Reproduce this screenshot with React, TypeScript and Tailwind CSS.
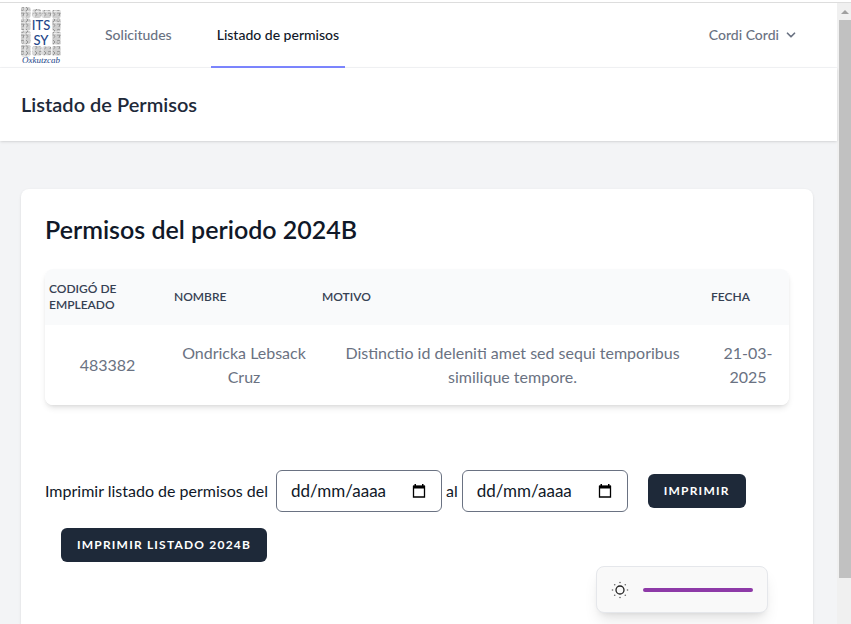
import { useState } from "react";
import { ChevronDown } from "lucide-react";

const columns = [
  { label: "Codigó de empleado", width: "w-[125px]" },
  { label: "Nombre", width: "w-[148px]" },
  { label: "Motivo", width: "" },
  { label: "Fecha", width: "w-[82px]" },
];

const rows = [
  {
    code: "483382",
    name: "Ondricka Lebsack Cruz",
    reason: "Distinctio id deleniti amet sed sequi temporibus similique tempore.",
    date: "21-03-2025",
  },
];

function Logo() {
  return (
    <svg width="42" height="60" viewBox="0 0 42 60" role="img" aria-label="ITSSY Oxkutzcab">
      <defs>
        <pattern id="glyph" width="9" height="11" patternUnits="userSpaceOnUse">
          <rect width="9" height="11" fill="#cfcfcf" />
          <path
            d="M1 2c2-1.500 4 0 3 1.500S1.500 5 1 3.500M6 1l2 2-2 2M1 7h3l-1 3M6 7c2 0 2.500 2 .5 3"
            fill="none"
            stroke="#8c8c8c"
            strokeWidth="0.900"
          />
          <path d="M4.800 0v4M0 5.800h5M5 8v3M7 5.500h2" stroke="#f2f2f2" strokeWidth="0.900" />
        </pattern>
      </defs>
      <g fill="url(#glyph)">
        <rect x="1" y="1" width="9.500" height="11" rx="2" />
        <rect x="1" y="12.500" width="9.500" height="12" rx="2" />
        <rect x="1" y="25" width="9.500" height="13" rx="2" />
        <rect x="1" y="38.500" width="9.500" height="12" rx="2" />
        <rect x="12.500" y="3" width="8.500" height="9" rx="2" />
        <rect x="21.500" y="4" width="9.500" height="8" rx="2" />
        <rect x="31.500" y="4" width="9.500" height="8" rx="2" />
        <rect x="32" y="12.500" width="9" height="12.500" rx="2" />
        <rect x="32" y="25.500" width="9" height="13.500" rx="2" />
        <rect x="12.500" y="40" width="9" height="10" rx="2" />
        <rect x="22" y="40.500" width="9.500" height="9" rx="2" />
        <rect x="32" y="40" width="9" height="10" rx="2" />
      </g>
      <g fill="#24478a" textAnchor="middle">
        <text x="21" y="24" className="text-[13px] font-medium">ITS</text>
        <text x="21" y="39" className="text-[13px] font-medium">SY</text>
        <text x="21" y="57" className="font-['Liberation_Serif',serif] text-[9px] italic">Oxkutzcab</text>
      </g>
    </svg>
  );
}

function DateField({ id, label }: { id: string; label: string }) {
  const [value, setValue] = useState("");
  return (
    <span className="flex h-[42px] w-[166px] items-center rounded-md border border-gray-500 bg-white px-3.5">
      <input
        id={id}
        type="text"
        aria-label={label}
        placeholder="dd/mm/aaaa"
        value={value}
        onChange={(e) => setValue(e.target.value)}
        className="min-w-0 flex-1 bg-transparent text-[17px] text-gray-900 outline-none placeholder:text-gray-900"
      />
      <button type="button" aria-label="Abrir calendario" className="text-black">
        <svg width="16" height="16" viewBox="0 0 16 16" fill="none">
          <path d="M2.500 3.500h11v10.500h-11z" stroke="currentColor" strokeWidth="1.300" />
          <path d="M2 2.500h12V5.500H2zM3.500 1H5v2H3.500zM11 1h1.500v2H11z" fill="currentColor" />
        </svg>
      </button>
    </span>
  );
}

function DarkButton({ children }: { children: string }) {
  return (
    <button
      type="button"
      className="ml-4 h-[34px] rounded-md bg-gray-800 px-4 text-xs font-bold tracking-widest text-white uppercase"
    >
      {children}
    </button>
  );
}

function BrightnessPanel() {
  const [level, setLevel] = useState(100);
  return (
    <div className="absolute right-[83px] bottom-[11px] flex h-[47px] w-[172px] items-center justify-between rounded-lg border border-gray-200 bg-[#f9f9f9] px-3.5 shadow-lg">
      <svg width="18" height="18" viewBox="0 0 18 18" fill="none" className="shrink-0">
        <circle cx="9" cy="9" r="4" stroke="#222" strokeWidth="1.300" />
        <g fill="#666">
          <circle cx="9" cy="1.500" r=".8" />
          <circle cx="9" cy="16.500" r=".8" />
          <circle cx="1.500" cy="9" r=".8" />
          <circle cx="16.500" cy="9" r=".8" />
          <circle cx="3.700" cy="3.700" r=".8" />
          <circle cx="14.300" cy="3.700" r=".8" />
          <circle cx="3.700" cy="14.300" r=".8" />
          <circle cx="14.300" cy="14.300" r=".8" />
        </g>
      </svg>
      <input
        type="range"
        aria-label="Brillo"
        min={0}
        max={100}
        value={level}
        onChange={(e) => setLevel(Number(e.target.value))}
        className="h-1 w-[110px] appearance-none rounded-full bg-[#8e3aa8] [&::-webkit-slider-thumb]:size-0 [&::-webkit-slider-thumb]:appearance-none"
      />
    </div>
  );
}

function Scrollbar() {
  return (
    <div aria-hidden="true" className="flex w-3.5 shrink-0 flex-col items-end bg-[#f0f0f0]">
      <div className="flex h-[17px] w-3 items-center justify-center">
        <svg width="8" height="4" viewBox="0 0 8 4">
          <path d="M0 4 4 0l4 4z" fill="#a0a0a0" />
        </svg>
      </div>
      <div className="w-3 grow-[12] bg-[#c1c1c1]" />
      <div className="grow" />
    </div>
  );
}

export default function App() {
  return (
    <div className="relative flex h-screen flex-col overflow-hidden bg-white font-['Lato',sans-serif] text-gray-900">
      <div className="h-[3px] shrink-0 border-b border-[#dddddd]" />
      <div className="flex min-h-0 flex-1">
        <div className="flex min-w-0 flex-1 flex-col bg-gray-100">
          <nav className="flex h-[65px] shrink-0 items-stretch border-b border-gray-100 bg-white pr-[38px] pl-5">
            <a href="#" className="mt-[3px] mr-[37px] shrink-0">
              <Logo />
            </a>
            <a href="#" className="flex items-center px-1.5 text-sm font-medium text-gray-500">
              Solicitudes
            </a>
            <a
              href="#"
              aria-current="page"
              className="-mb-px ml-[33px] flex items-center border-b-2 border-indigo-400 px-1.5 text-sm font-medium"
            >
              Listado de permisos
            </a>
            <button type="button" className="ml-auto flex items-center gap-1 text-sm font-medium text-gray-500">
              Cordi Cordi
              <ChevronDown size={16} strokeWidth={3} className="p-px" />
            </button>
          </nav>
          <header className="relative shrink-0 bg-white px-[21px] py-6 shadow-sm">
            <h1 className="text-xl leading-tight font-semibold text-gray-800">Listado de Permisos</h1>
          </header>
          <main className="flex flex-1 flex-col pt-12 pr-6 pl-[21px]">
            <section className="flex-1 rounded-t-lg bg-white p-6 shadow-sm">
              <h2 className="text-[25px] leading-8 font-semibold">Permisos del periodo 2024B</h2>
              <div className="mt-6 overflow-hidden rounded-lg shadow-md">
                <table className="w-full table-fixed">
                  <thead className="bg-gray-50 text-left text-xs text-gray-700 uppercase">
                    <tr>
                      {columns.map((c) => (
                        <th key={c.label} scope="col" className={`${c.width} py-3 pr-8 pl-1 font-semibold`}>
                          {c.label}
                        </th>
                      ))}
                    </tr>
                  </thead>
                  <tbody className="text-center text-gray-500">
                    {rows.map((r) => (
                      <tr key={r.code} className="bg-white">
                        <td className="px-2 py-4">{r.code}</td>
                        <td className="px-2 py-4">{r.name}</td>
                        <td className="px-5 py-4">{r.reason}</td>
                        <td className="px-3 py-4">{r.date}</td>
                      </tr>
                    ))}
                  </tbody>
                </table>
              </div>
              <form className="mt-[65px] flex flex-wrap items-center gap-x-1 gap-y-4">
                <label htmlFor="from" className="pr-1">
                  Imprimir listado de permisos del
                </label>
                <DateField id="from" label="Desde" />
                <label htmlFor="to">al</label>
                <DateField id="to" label="Hasta" />
                <DarkButton>Imprimir</DarkButton>
                <span className="basis-full">
                  <DarkButton>Imprimir listado 2024B</DarkButton>
                </span>
              </form>
            </section>
          </main>
        </div>
        <Scrollbar />
      </div>
      <BrightnessPanel />
    </div>
  );
}
